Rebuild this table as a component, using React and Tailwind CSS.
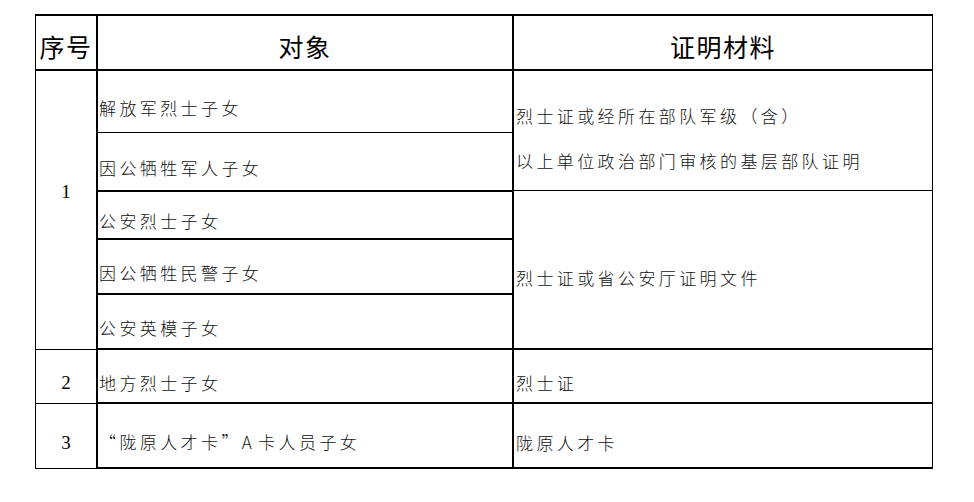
const cjk = { fontFamily: '"Noto Sans CJK SC", "Noto Sans", sans-serif' };

const subjects = [
  { text: '解放军烈士子女', h: 'h-[62px] border-b' },
  { text: '因公牺牲军人子女', h: 'h-[59px] border-b-2' },
  { text: '公安烈士子女', h: 'h-[48px] border-b-2' },
  { text: '因公牺牲民警子女', h: 'h-[55px] border-b-2' },
  { text: '公安英模子女', h: 'h-[55px] border-b-2' },
];

function Num({ children, className }) {
  return (
    <div
      className={`flex w-[62px] shrink-0 items-center justify-center border-r-2 border-b border-black text-[19px] text-black ${className}`}
      style={{ fontFamily: '"Liberation Serif", "Times New Roman", serif' }}
    >
      {children}
    </div>
  );
}

function Cell({ children, className }) {
  return (
    <div
      className={`flex items-center pt-[12px] pl-[1px] text-[17px] font-light tracking-[3.4px] text-[#111] ${className}`}
      style={cjk}
    >
      {children}
    </div>
  );
}

export default function App() {
  return (
    <div className="min-h-screen bg-white pt-[14px]">
      <div className="ml-[35px] w-[898px] border-t-2 border-r-[1.5px] border-l border-black">
        {/* header */}
        <div className="flex h-[55px] border-b-2 border-black text-[25px] tracking-[1.5px] text-black" style={cjk}>
          <div className="flex w-[62px] shrink-0 items-center justify-center border-r-2 border-black pt-[8px]">序号</div>
          <div className="flex w-[416px] shrink-0 items-center justify-center border-r-2 border-black pt-[8px]">对象</div>
          <div className="flex flex-1 items-center justify-center pt-[8px]">证明材料</div>
        </div>

        {/* group 1 */}
        <div className="flex">
          <Num className="pb-[36px]">1</Num>
          <div className="flex w-[416px] shrink-0 flex-col border-r-2 border-black">
            {subjects.map((s) => (
              <Cell key={s.text} className={`${s.h} border-black`}>
                {s.text}
              </Cell>
            ))}
          </div>
          <div className="flex flex-1 flex-col">
            <div
              className="flex h-[120px] flex-col justify-center border-b border-black pt-[14px] pl-[2px] text-[17px] leading-[45px] font-light tracking-[3.4px] text-[#111]"
              style={cjk}
            >
              <span>烈士证或经所在部队军级（含）</span>
              <span>以上单位政治部门审核的基层部队证明</span>
            </div>
            <Cell className="flex-1 border-b-2 border-black pt-[16px] pl-[2px]">烈士证或省公安厅证明文件</Cell>
          </div>
        </div>

        {/* row 2 */}
        <div className="flex h-[54px]">
          <Num className="pt-[13px]">2</Num>
          <Cell className="w-[416px] shrink-0 border-r-2 border-b-2 border-black pt-[13px]">地方烈士子女</Cell>
          <Cell className="flex-1 border-b-2 border-black pt-[13px] pl-[2px]">烈士证</Cell>
        </div>

        {/* row 3 */}
        <div className="flex h-[65px]">
          <Num className="pt-[14px]">3</Num>
          <Cell className="w-[416px] shrink-0 border-r-2 border-b-2 border-black pt-[10px] tracking-[1px]">
            “陇原人才卡”<span className="mr-[3px]">A</span>卡人员子女
          </Cell>
          <Cell className="flex-1 border-b-2 border-black pt-[14px] pl-[2px]">陇原人才卡</Cell>
        </div>
      </div>
    </div>
  );
}
